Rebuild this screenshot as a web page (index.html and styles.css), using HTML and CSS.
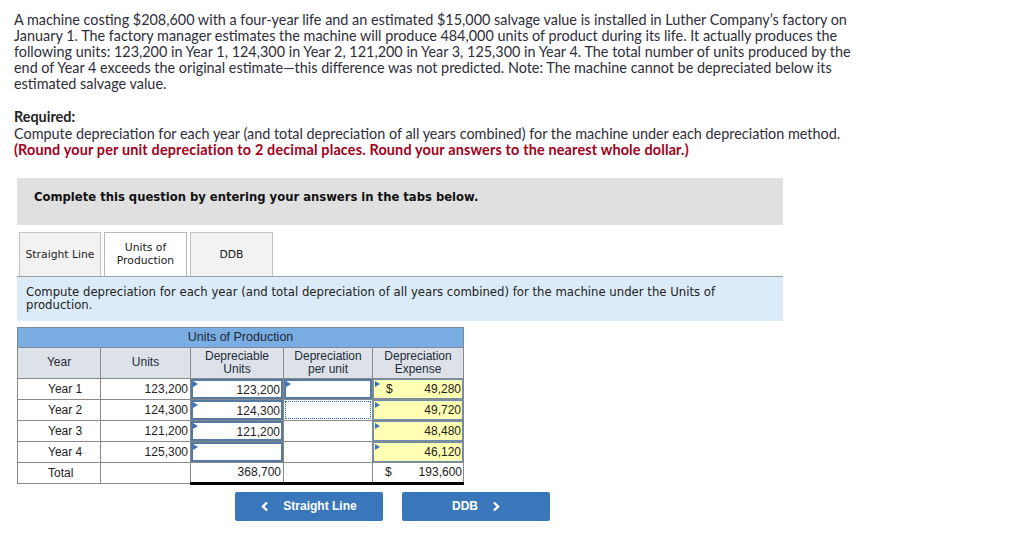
FILE: index.html
```html
<!DOCTYPE html>
<html>
<head>
<meta charset="utf-8">
<link rel="stylesheet" href="styles.css">
</head>
<body>
<div class="page">
  <p class="intro">A machine costing $208,600 with a four-year life and an estimated $15,000 salvage value is installed in Luther Company’s factory on January 1. The factory manager estimates the machine will produce 484,000 units of product during its life. It actually produces the following units: 123,200 in Year 1, 124,300 in Year 2, 121,200 in Year 3, 125,300 in Year 4. The total number of units produced by the end of Year 4 exceeds the original estimate—this difference was not predicted. Note: The machine cannot be depreciated below its estimated salvage value.</p>
  <div class="required">
    <div class="req-title">Required:</div>
    <div class="req-text">Compute depreciation for each year (and total depreciation of all years combined) for the machine under each depreciation method.</div>
    <div class="req-note">(Round your per unit depreciation to 2 decimal places. Round your answers to the nearest whole dollar.)</div>
  </div>

  <div class="work">
    <div class="banner">Complete this question by entering your answers in the tabs below.</div>
    <div class="tabs">
      <div class="tab">Straight Line</div>
      <div class="tab active">Units of<br>Production</div>
      <div class="tab">DDB</div>
    </div>
    <div class="instruct">Compute depreciation for each year (and total depreciation of all years combined) for the machine under the Units of production.</div>

    <table class="grid">
      <tr class="title-row"><td colspan="5">Units of Production</td></tr>
      <tr class="head-row">
        <td class="c-year">Year</td>
        <td class="c-units">Units</td>
        <td class="c-dep">Depreciable<br>Units</td>
        <td class="c-per">Depreciation<br>per unit</td>
        <td class="c-exp">Depreciation<br>Expense</td>
      </tr>
      <tr>
        <td class="year">Year 1</td>
        <td class="num">123,200</td>
        <td class="inp flag"><div class="box">123,200</div></td>
        <td class="inp flag"><div class="box"></div></td>
        <td class="inp flag yellow"><div class="box money"><span>$</span><span>49,280</span></div></td>
      </tr>
      <tr>
        <td class="year">Year 2</td>
        <td class="num">124,300</td>
        <td class="inp flag"><div class="box">124,300</div></td>
        <td class="inp"><div class="box focus"></div></td>
        <td class="inp flag yellow"><div class="box money"><span></span><span>49,720</span></div></td>
      </tr>
      <tr>
        <td class="year">Year 3</td>
        <td class="num">121,200</td>
        <td class="inp flag"><div class="box">121,200</div></td>
        <td class="plain"></td>
        <td class="inp flag yellow"><div class="box money"><span></span><span>48,480</span></div></td>
      </tr>
      <tr>
        <td class="year">Year 4</td>
        <td class="num">125,300</td>
        <td class="inp flag"><div class="box"></div></td>
        <td class="plain"></td>
        <td class="inp flag yellow"><div class="box money"><span></span><span>46,120</span></div></td>
      </tr>
      <tr class="total-row">
        <td class="year">Total</td>
        <td class="num"></td>
        <td class="num tot">368,700</td>
        <td class="num tot"></td>
        <td class="tot"><div class="money plainmoney"><span>$</span><span>193,600</span></div></td>
      </tr>
    </table>

    <div class="nav">
      <div class="btn prev"><svg class="chev" width="8" height="11" viewBox="0 0 8 11"><polyline points="6,1.5 2,5.5 6,9.5" fill="none" stroke="#fff" stroke-width="2.4"/></svg><span>Straight Line</span></div>
      <div class="btn next"><span>DDB</span><svg class="chev" width="8" height="11" viewBox="0 0 8 11"><polyline points="2,1.5 6,5.5 2,9.5" fill="none" stroke="#fff" stroke-width="2.4"/></svg></div>
    </div>
  </div>
</div>
</body>
</html>
```

FILE: styles.css
```css
html, body { margin: 0; padding: 0; background: #fff; }
.page { padding: 12px 0 0 14px; }
.intro {
  margin: 0;
  width: 838px;
  font-family: "Lato", "Open Sans", sans-serif;
  font-size: 14.4px;
  line-height: 16px;
  color: #2e2e3a;
}
.required {
  margin-top: 17px;
  font-family: "Lato", "Open Sans", sans-serif;
  font-size: 14.4px;
  line-height: 16.5px;
  color: #2e2e3a;
}
.req-title { font-weight: bold; color: #222; }
.req-note { font-weight: bold; color: #a3001b; letter-spacing: 0.17px; }

.work { margin: 19px 0 0 3px; width: 766px; }
.banner {
  background: #e0e0e0;
  height: 47px;
  box-sizing: border-box;
  padding: 12px 0 0 17px;
  font-family: "DejaVu Sans", Verdana, sans-serif;
  font-weight: bold;
  font-size: 11.6px;
  color: #111;
}
.tabs { display: flex; gap: 3px; margin: 7px 0 0 2px; height: 44px; }
.tab {
  width: 82px;
  box-sizing: border-box;
  background: #f2f2f2;
  border: 1px solid #c4c4c4;
  border-bottom: none;
  display: flex;
  align-items: center;
  justify-content: center;
  text-align: center;
  font-family: "DejaVu Sans", Verdana, sans-serif;
  font-size: 10.8px;
  line-height: 13px;
  color: #222;
}
.tab.active { background: #fff; width: 83px; border-color: #b8b8b8; }
.tab:last-child { width: 83px; }

.instruct {
  background: #dcebf8;
  border-top: 1px solid #a0a0a0;
  height: 45px;
  box-sizing: border-box;
  padding: 9px 30px 0 9px;
  font-family: "DejaVu Sans", Verdana, sans-serif;
  font-size: 11.7px;
  line-height: 13.5px;
  color: #222;
}

.grid {
  margin-top: 6px;
  border-collapse: collapse;
  font-family: "Liberation Sans", Arial, sans-serif;
  font-size: 12px;
  color: #222;
}
.grid td { border: 1px solid #8a8a8a; padding: 0; height: 20px; box-sizing: border-box; }
.title-row td {
  background: #7aade2;
  border-color: #7a8a9a;
  text-align: center;
  height: 20px;
  font-size: 12.5px;
  color: #1e2a38;
}
.head-row td {
  background: #dde2e9;
  height: 31px;
  text-align: center;
  line-height: 13px;
  color: #1e2a38;
}
.c-year { width: 83px; }
.c-units { width: 90px; }
.c-dep { width: 93px; }
.c-per { width: 89px; }
.c-exp { width: 91px; }
.grid td.year { text-align: left; padding-left: 30px; }
.num { text-align: right; padding-right: 2px !important; }
.inp { position: relative; }
.inp .box {
  height: 20px;
  box-sizing: border-box;
  border: 2px solid #5479a3;
  text-align: right;
  padding: 2px 1px 0 0;
  line-height: 15px;
  background: #fff;
}
.inp .box.focus { border: 1px dotted #2a6fc0; margin: 1px; height: 18px; }
.yellow .box { background: #ffffb3; border-color: #6d8db3; border-width: 1px; }
.money { display: flex; justify-content: space-between; padding-left: 12px !important; }
.plainmoney { padding: 0 1px 0 12px; }
.flag::before {
  content: "";
  position: absolute;
  left: 2px;
  top: 2px;
  border-style: solid;
  border-width: 3px 0 3px 5px;
  border-color: transparent transparent transparent #3b73c4;
  z-index: 1;
}
.total-row td { height: 21px; }
.total-row td.tot { border-bottom: 3px solid #000; }

.nav { display: flex; gap: 19px; margin: 7px 0 0 218px; }
.btn {
  width: 148px;
  height: 29px;
  background: #3a77ba;
  border-radius: 2px;
  color: #fff;
  font-family: "Liberation Sans", Arial, sans-serif;
  font-weight: bold;
  font-size: 12px;
  display: flex;
  align-items: center;
  justify-content: center;
  gap: 14px;
}
.chev { display: block; }
```
